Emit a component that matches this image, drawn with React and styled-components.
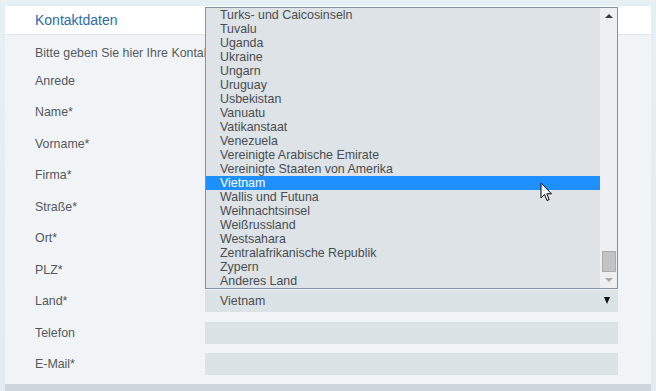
import React from "react";
import styled, { createGlobalStyle } from "styled-components";

const Global = createGlobalStyle`
  html, body { margin: 0; padding: 0; }
  body {
    background: #e4edf1;
    font-family: "Liberation Sans", Arial, sans-serif;
  }
`;

const Page = styled.div`
  width: 656px;
  height: 391px;
  overflow: hidden;
  box-sizing: border-box;
  padding: 6px 5px 0 5px;
  background: linear-gradient(180deg, #e6eff3 0%, #e2ebf0 100%);
`;

const Panel = styled.div`
  position: relative;
  background: #f0f4f7;
  height: 385px;
  display: flex;
  flex-direction: column;
`;

const Header = styled.div`
  height: 28px;
  background: #ffffff;
  border-bottom: 1px solid #e1e7eb;
  padding-left: 30px;
  display: flex;
  align-items: center;
  font-size: 14px;
  color: #2c6aa9;
`;

const Body = styled.div`
  padding: 11px 33px 0 30px;
  flex: 1;
`;

const Intro = styled.div`
  width: 170px;
  overflow: hidden;
  font-size: 12.4px;
  line-height: 14px;
  color: #555a5e;
  margin-bottom: 5px;
  white-space: nowrap;
`;

const Row = styled.div`
  height: 31.5px;
  display: grid;
  grid-template-columns: 170px 413px;
  align-items: center;
`;

const Label = styled.div`
  font-size: 12.4px;
  color: #53585c;
`;

const Field = styled.div`
  height: 22px;
  background: #dce3e7;
  display: flex;
  align-items: center;
  justify-content: space-between;
  padding: 0 8px 0 15px;
  font-size: 12.4px;
  color: #4d4d4d;
`;

const Caret = styled.span`
  width: 0;
  height: 0;
  border-left: 3.5px solid transparent;
  border-right: 3.5px solid transparent;
  border-top: 7px solid #111;
  margin-top: -2px;
`;

const BottomBar = styled.div`
  height: 7px;
  background: #ccd6dc;
`;

const Dropdown = styled.div`
  position: absolute;
  left: 200px;
  top: 1px;
  width: 411px;
  height: 280px;
  border: 1px solid #8093a8;
  background: #dde3e7;
  display: flex;
`;

const List = styled.div`
  width: 394px;
  display: flex;
  flex-direction: column;
`;

const Item = styled.div`
  height: 14px;
  line-height: 14px;
  padding-left: 14px;
  font-size: 12.4px;
  white-space: nowrap;
  color: ${(p) => (p.$active ? "#ffffff" : "#4a4d50")};
  background: ${(p) => (p.$active ? "#1e8fff" : "transparent")};
`;

const Scrollbar = styled.div`
  width: 17px;
  background: #eeeff0;
  display: flex;
  flex-direction: column;
  align-items: center;
  padding-top: 6px;
  box-sizing: border-box;
`;

const ArrowUp = styled.span`
  width: 0;
  height: 0;
  border-left: 4px solid transparent;
  border-right: 4px solid transparent;
  border-bottom: 4px solid ${(p) => p.$color};
`;

const ArrowDown = styled.span`
  width: 0;
  height: 0;
  border-left: 4px solid transparent;
  border-right: 4px solid transparent;
  border-top: 4px solid ${(p) => p.$color};
`;

const Track = styled.div`
  flex: 1;
`;

const Thumb = styled.div`
  width: 12px;
  height: 19px;
  background: #c3c3c3;
  border: 1px solid #ababab;
  margin-bottom: 6px;
`;

const Bottom = styled.div`
  margin-bottom: 6px;
  display: flex;
`;

const Cursor = styled.svg`
  position: absolute;
  left: 535px;
  top: 176px;
`;

const items = [
  "Turks- und Caicosinseln",
  "Tuvalu",
  "Uganda",
  "Ukraine",
  "Ungarn",
  "Uruguay",
  "Usbekistan",
  "Vanuatu",
  "Vatikanstaat",
  "Venezuela",
  "Vereinigte Arabische Emirate",
  "Vereinigte Staaten von Amerika",
  "Vietnam",
  "Wallis und Futuna",
  "Weihnachtsinsel",
  "Weißrussland",
  "Westsahara",
  "Zentralafrikanische Republik",
  "Zypern",
  "Anderes Land",
];

const labels = [
  "Anrede",
  "Name*",
  "Vorname*",
  "Firma*",
  "Straße*",
  "Ort*",
  "PLZ*",
  "Land*",
  "Telefon",
  "E-Mail*",
];

export default function App() {
  return (
    <>
      <Global />
      <Page>
        <Panel>
          <Header>Kontaktdaten</Header>
          <Body>
            <Intro>Bitte geben Sie hier Ihre Kontaktdaten ein.</Intro>
            {labels.map((l) => (
              <Row key={l}>
                <Label>{l}</Label>
                {l === "Land*" ? (
                  <Field>
                    <span>Vietnam</span>
                    <Caret />
                  </Field>
                ) : (
                  <Field />
                )}
              </Row>
            ))}
          </Body>
          <BottomBar />
          <Dropdown>
            <List>
              {items.map((it) => (
                <Item key={it} $active={it === "Vietnam"}>
                  {it}
                </Item>
              ))}
            </List>
            <Scrollbar>
              <ArrowUp $color="#3c3c3c" />
              <Track />
              <Thumb />
              <Bottom>
                <ArrowDown $color="#a9a9a9" />
              </Bottom>
            </Scrollbar>
          </Dropdown>
          <Cursor width="13" height="21" viewBox="0 0 13 21">
            <path
              d="M1 1 L1 16 L4.5 12.5 L7 18.5 L9.2 17.6 L6.8 11.8 L11.5 11.8 Z"
              fill="#fff"
              stroke="#000"
              strokeWidth="1"
              strokeLinejoin="miter"
            />
          </Cursor>
        </Panel>
      </Page>
    </>
  );
}
